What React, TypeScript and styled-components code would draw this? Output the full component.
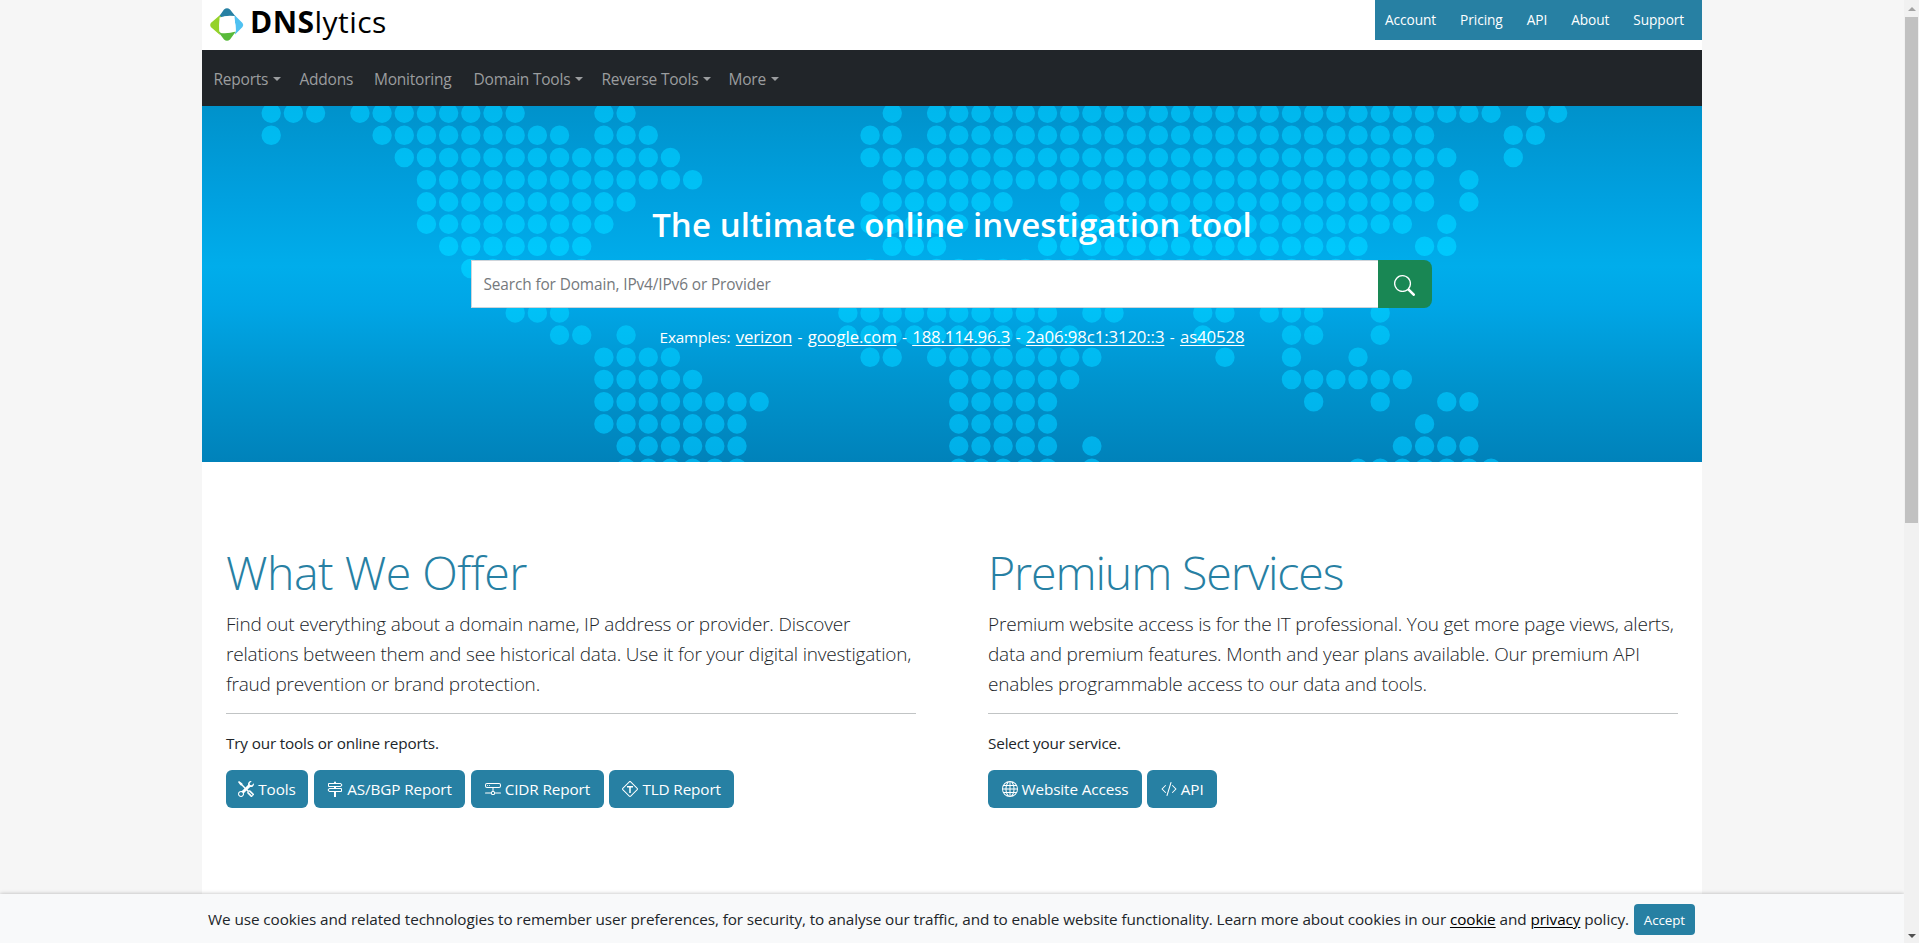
import React from 'react';
import styled, { createGlobalStyle } from 'styled-components';
import {
  BsTools, BsSignpost2, BsHddNetwork, BsSignIntersectionT, BsGlobe, BsCodeSlash, BsSearch,
} from 'react-icons/bs';

const GlobalStyle = createGlobalStyle`
  *, *::before, *::after { box-sizing: border-box; }
  html, body { margin: 0; height: 100%; overflow: hidden; }
  body {
    background: #f6f6f6;
    color: #212529;
    font-family: "Open Sans", "Noto Sans", sans-serif;
    font-size: 15.3px;
    letter-spacing: -0.17px;
  }
  h1, h2, p { margin: 0; }
  a { color: inherit; }
`;

const Screen = styled.div`
  display: grid;
  grid-template-columns: 1fr 15px;
  grid-template-rows: minmax(0, 1fr) auto;
  height: 943px;
`;

const Viewport = styled.div`
  overflow: hidden;
  display: flex;
  justify-content: center;
`;

const Page = styled.div`
  width: 1500px;
  background: #fff;
`;

const TopBar = styled.header`
  height: 50px;
  display: flex;
  justify-content: space-between;
  align-items: flex-start;
`;

const Brand = styled.div`
  display: flex;
  align-items: center;
  padding: 6px 0 0 7px;
  gap: 5px;
  color: #000;
`;

const BrandName = styled.span`
  margin-top: -4px;
  font-size: 30px;
  letter-spacing: 0.45px;
  line-height: 36px;
`;

const TopLinks = styled.nav`
  display: flex;
  gap: 24px;
  width: 327px;
  height: 40px;
  padding: 0 0 0 10px;
  background: #2780a3;
  color: #fff;
  font-size: 13.7px;
  letter-spacing: -0.08px;
  line-height: 40px;
`;

const NavBar = styled.nav`
  display: flex;
  height: 56px;
  padding: 1px 0 0 11.5px;
  background: #212529;
  color: #9b9d9f;
`;

const NavItem = styled.span<{ $width: number }>`
  display: flex;
  align-items: center;
  gap: 5px;
  width: ${p => p.$width}px;
  font-size: 15.5px;
  letter-spacing: -0.22px;
  white-space: nowrap;
`;

const Caret = styled.i`
  border: 4px solid transparent;
  border-top-color: currentColor;
  border-bottom: 0;
`;

const Hero = styled.section`
  display: grid;
  height: 356px;
  background: linear-gradient(#0092cb 0%, #00a0df 25%, #00adeb 45%, #00a6e6 56%, #0093cd 78%, #0082ba 100%);
  & > * { grid-area: 1 / 1; }
`;

const HeroContent = styled.div`
  display: flex;
  flex-direction: column;
  align-items: center;
  padding-top: 95px;
  color: #fff;
`;

const HeroTitle = styled.h1`
  font-size: 33px;
  font-weight: 600;
  line-height: 48px;
  letter-spacing: 0.1px;
`;

const SearchGroup = styled.div`
  display: flex;
  width: 961px;
  height: 48px;
  margin: 11px 2px 0 0;
`;

const SearchField = styled.div`
  flex: 1;
  padding-left: 12px;
  border: 1px solid #ced4da;
  border-right: 0;
  background: #fff;
  color: #75797d;
  font-size: 15.4px;
  letter-spacing: -0.12px;
  line-height: 48px;
`;

const SearchButton = styled.button`
  display: flex;
  align-items: center;
  justify-content: center;
  width: 54px;
  padding: 2px 0 0;
  border: 0;
  border-radius: 0 8px 8px 0;
  background: #198754;
  color: #fff;
`;

const Examples = styled.p`
  margin-top: 15px;
  font-size: 15.3px;
  line-height: 28px;
  word-spacing: 1.6px;
  a { font-size: 16.8px; letter-spacing: -0.12px; text-underline-offset: 2px; }
`;

const Columns = styled.main`
  display: grid;
  grid-template-columns: 1fr 1fr;
  column-gap: 72px;
  padding: 81px 24px 0;
`;

const SectionTitle = styled.h2<{ $tracking: number }>`
  color: #2780a3;
  font-size: 46.5px;
  font-weight: 300;
  line-height: 58px;
  letter-spacing: ${p => p.$tracking}px;
`;

const Lead = styled.p`
  margin-top: 8px;
  font-size: 19px;
  font-weight: 300;
  line-height: 30px;
  letter-spacing: -0.19px;
  white-space: nowrap;
`;

const Rule = styled.hr`
  height: 1px;
  margin: 14px 0 17px;
  border: 0;
  background: #c1c4c5;
`;

const Note = styled.p`
  line-height: 24px;
`;

const ButtonRow = styled.div<{ $gap: number }>`
  display: flex;
  gap: ${p => p.$gap}px;
  margin-top: 15px;
`;

const ActionButton = styled.button<{ $width: number }>`
  display: flex;
  align-items: center;
  justify-content: center;
  gap: 4px;
  width: ${p => p.$width}px;
  height: 38px;
  padding: 0;
  border: 0;
  border-radius: 6px;
  background: #2780a3;
  color: #fff;
  font: inherit;
  letter-spacing: -0.13px;
  white-space: nowrap;
`;

const CookieBar = styled.footer`
  position: relative;
  display: flex;
  align-items: center;
  height: 49px;
  padding: 2px 0 0 208px;
  gap: 5px;
  background: #f8f9fa;
  box-shadow: 0 0 4px rgba(0, 0, 0, 0.28);
  clip-path: inset(-6px 0 0 0);
  letter-spacing: -0.09px;
  white-space: nowrap;
  span { margin-top: -2px; }
  a { color: #000; text-underline-offset: 2px; }
`;

const AcceptButton = styled.button`
  width: 61px;
  height: 31px;
  padding: 0;
  border: 0;
  border-radius: 4px;
  background: #2780a3;
  color: #fff;
  font: inherit;
  font-size: 13.4px;
  letter-spacing: -0.1px;
`;

const Scrollbar = styled.div`
  grid-column: 2;
  grid-row: 1 / 3;
  display: flex;
  flex-direction: column;
  align-items: center;
  background: #f1f1f1;
`;

const ScrollArrow = styled.i<{ $down?: boolean }>`
  margin-top: ${p => (p.$down ? 'auto' : '7px')};
  margin-bottom: ${p => (p.$down ? '5px' : '6px')};
  border: 4px solid transparent;
  ${p => (p.$down
    ? 'border-top-color: #505050; border-bottom: 0;'
    : 'border-bottom-color: #a3a3a3; border-top: 0;')}
`;

const ScrollThumb = styled.div`
  width: 13px;
  height: 506px;
  background: #c1c1c1;
`;

/* Each row lists inclusive column ranges of the dotted world map. */
const MAP_ROWS: number[][][] = [
  [[0, 2], [4, 11], [15, 16], [28, 28], [30, 55], [57, 58]],
  [[0, 0], [5, 13], [15, 17], [27, 28], [30, 52], [56, 57]],
  [[6, 18], [27, 53], [56, 56]],
  [[7, 19], [28, 52], [54, 54]],
  [[7, 16], [27, 33], [36, 36], [38, 52], [54, 54]],
  [[7, 15], [27, 31], [36, 51], [53, 53]],
  [[8, 14], [28, 30], [35, 49], [52, 53]],
  [[9, 11], [14, 14], [27, 27], [30, 49]],
  [],
  [[11, 13], [26, 35], [37, 38], [42, 43], [45, 47], [50, 50]],
  [[13, 14], [16, 16], [26, 36], [42, 42], [46, 47], [50, 50]],
  [[15, 18], [27, 28], [30, 37], [43, 43], [46, 46], [49, 49]],
  [[15, 19], [31, 36], [46, 51]],
  [[15, 22], [31, 35], [47, 47], [50, 50], [53, 54]],
  [[15, 21], [31, 35], [52, 52]],
  [[16, 21], [31, 35], [37, 37], [51, 54]],
  [[16, 21], [31, 35], [37, 37], [49, 55]],
];

function WorldMap() {
  return (
    <svg width="1500" height="356" viewBox="0 0 1500 356">
      <defs>
        <linearGradient id="dots" gradientUnits="userSpaceOnUse" x1="0" y1="0" x2="0" y2="356">
          <stop offset="0" stopColor="#00b7ed" />
          <stop offset="0.43" stopColor="#00c9fd" />
          <stop offset="0.65" stopColor="#00bdf3" />
          <stop offset="1" stopColor="#00afe8" />
        </linearGradient>
      </defs>
      <g fill="url(#dots)">
        {MAP_ROWS.map((ranges, row) => (
          <path
            key={row}
            d={ranges
              .flatMap(([from, to]) => Array.from({ length: to - from + 1 }, (_, i) => from + i))
              .map(col => `M${(59.5 + col * 22.18).toFixed(2)} ${(7.1 + row * 22.2).toFixed(2)}a9.7 9.8 0 1 0 19.4 0a9.7 9.8 0 1 0 -19.4 0`)
              .join('')}
          />
        ))}
      </g>
    </svg>
  );
}

function Logo() {
  return (
    <svg width="36" height="36" viewBox="0 0 36 36">
      <path d="M10 10.5 15 3.5Q18 1 21 3.5L27 11Q18 8.500 10 13Z" fill="#2780a3" />
      <path d="M26 9.500 33.500 17Q35 19 33.500 21L26 28.500Q28 18 24 10.500Z" fill="#4fc1f1" />
      <path d="M26.500 26 21 33.500Q18 36 15 33.500L9 25.500Q18 28.500 26.500 24Z" fill="#58ba3a" />
      <path d="M10.500 9.500 1.800 17Q.5 19 1.800 21L11 29Q8.500 19 12 10.500Z" fill="#95d22a" />
      <path d="M10.500 11.500Q18 8.800 25.500 10Q26 18 27 25.500Q19 28 11.500 27Q10 19 10.500 11.500Z" fill="#fff" />
    </svg>
  );
}

const NAV: { label: string; width: number; menu?: boolean }[] = [
  { label: 'Reports', width: 86, menu: true },
  { label: 'Addons', width: 74.5 },
  { label: 'Monitoring', width: 99.5 },
  { label: 'Domain Tools', width: 128, menu: true },
  { label: 'Reverse Tools', width: 127, menu: true },
  { label: 'More', width: 60, menu: true },
];

export default function App() {
  return (
    <>
      <GlobalStyle />
      <Screen>
        <Viewport>
          <Page>
            <TopBar>
              <Brand>
                <Logo />
                <BrandName><b>DNS</b>lytics</BrandName>
              </Brand>
              <TopLinks>
                {['Account', 'Pricing', 'API', 'About', 'Support'].map(t => <span key={t}>{t}</span>)}
              </TopLinks>
            </TopBar>
            <NavBar>
              {NAV.map(({ label, width, menu }) => (
                <NavItem key={label} $width={width}>{label}{menu && <Caret />}</NavItem>
              ))}
            </NavBar>
            <Hero>
              <WorldMap />
              <HeroContent>
                <HeroTitle>The ultimate online investigation tool</HeroTitle>
                <SearchGroup>
                  <SearchField>Search for Domain, IPv4/IPv6 or Provider</SearchField>
                  <SearchButton aria-label="Search"><BsSearch size={21} /></SearchButton>
                </SearchGroup>
                <Examples>
                  Examples: <a href="#">verizon</a> - <a href="#">google.com</a> - <a href="#">188.114.96.3</a> - <a href="#">2a06:98c1:3120::3</a> - <a href="#">as40528</a>
                </Examples>
              </HeroContent>
            </Hero>
            <Columns>
              <section>
                <SectionTitle $tracking={-0.5}>What We Offer</SectionTitle>
                <Lead>
                  Find out everything about a domain name, IP address or provider. Discover<br />
                  relations between them and see historical data. Use it for your digital investigation,<br />
                  fraud prevention or brand protection.
                </Lead>
                <Rule />
                <Note>Try our tools or online reports.</Note>
                <ButtonRow $gap={5.8}>
                  <ActionButton $width={82}><BsTools size={16} />Tools</ActionButton>
                  <ActionButton $width={151.5}><BsSignpost2 size={16} />AS/BGP Report</ActionButton>
                  <ActionButton $width={132.5}><BsHddNetwork size={16} />CIDR Report</ActionButton>
                  <ActionButton $width={124.5}><BsSignIntersectionT size={16} />TLD Report</ActionButton>
                </ButtonRow>
              </section>
              <section>
                <SectionTitle $tracking={-1.12}>Premium Services</SectionTitle>
                <Lead>
                  Premium website access is for the IT professional. You get more page views, alerts,<br />
                  data and premium features. Month and year plans available. Our premium API<br />
                  enables programmable access to our data and tools.
                </Lead>
                <Rule />
                <Note>Select your service.</Note>
                <ButtonRow $gap={5.2}>
                  <ActionButton $width={154}><BsGlobe size={16} />Website Access</ActionButton>
                  <ActionButton $width={70}><BsCodeSlash size={16} />API</ActionButton>
                </ButtonRow>
              </section>
            </Columns>
          </Page>
        </Viewport>
        <CookieBar>
          <span>
            We use cookies and related technologies to remember user preferences, for security, to analyse our traffic, and to enable website functionality. Learn more about cookies in our <a href="#">cookie</a> and <a href="#">privacy</a> policy.
          </span>
          <AcceptButton>Accept</AcceptButton>
        </CookieBar>
        <Scrollbar>
          <ScrollArrow />
          <ScrollThumb />
          <ScrollArrow $down />
        </Scrollbar>
      </Screen>
    </>
  );
}
